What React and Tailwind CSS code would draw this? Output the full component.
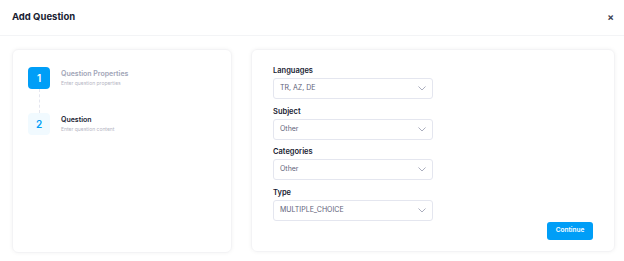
import React from "react";

const font = { fontFamily: "Inter, 'Noto Sans', sans-serif" };

// Small chevron used on the select boxes
const Chevron = () => (
  <svg width="8" height="5" viewBox="0 0 8 5" fill="none">
    <path d="M0.75 0.75L4 4L7.25 0.75" stroke="#a1a5b7" strokeWidth="0.9" strokeLinecap="round" strokeLinejoin="round" />
  </svg>
);

const fields = [
  { label: "Languages", value: "TR, AZ, DE" },
  { label: "Subject", value: "Other" },
  { label: "Categories", value: "Other" },
  { label: "Type", value: "MULTIPLE_CHOICE" },
];

const Field = ({ label, value }) => (
  <div className="flex flex-col">
    <div className="text-[7.5px] leading-[11px] font-semibold text-[#181c32] mb-[2px]">{label}</div>
    <div className="w-[160px] h-[21px] border border-[#e4e6ef] rounded-[3px] flex items-center justify-between pl-[6px] pr-[6px] bg-white">
      <span className="text-[7px] text-[#5e6278]">{value}</span>
      <Chevron />
    </div>
  </div>
);

const Step = ({ num, title, subtitle, active }) => (
  <div className="flex items-start">
    <div
      className={
        active
          ? "w-[22px] h-[22px] rounded-[4px] bg-[#009ef7] text-white flex items-center justify-center text-[10px] font-semibold"
          : "w-[22px] h-[22px] rounded-[4px] bg-[#f1faff] text-[#009ef7] flex items-center justify-center text-[10px] font-semibold"
      }
    >
      {num}
    </div>
    <div className="ml-[11px] pt-[2px] flex flex-col">
      <span className={active ? "text-[7px] leading-[10px] font-semibold text-[#a1a5b7]" : "text-[7px] leading-[10px] font-semibold text-[#181c32]"}>
        {title}
      </span>
      <span className="text-[5px] leading-[8px] text-[#b5b5c3]">{subtitle}</span>
    </div>
  </div>
);

export default function App() {
  return (
    <div className="w-[624px] h-[261px] bg-white overflow-hidden" style={font}>
      {/* header */}
      <div className="h-[36px] px-[12px] flex items-center justify-between border-b border-[#f3f4f6]">
        <span className="text-[9.5px] font-bold text-[#181c32]">Add Question</span>
        <span className="text-[10px] font-bold text-[#3f4254] mr-[-2px]">×</span>
      </div>

      <div className="flex gap-[19px] pl-[12px] pt-[13px]">
        {/* steps card */}
        <div className="shrink-0 w-[220px] h-[204px] rounded-[6px] border border-[#f3f3f5] shadow-[0_0_4px_rgba(0,0,0,0.05)] pt-[17px] pl-[15px]">
          <Step num="1" title="Question Properties" subtitle="Enter question properties" active />
          <div className="ml-[10.5px] h-[24px] border-l border-dashed border-[#e4e6ef]" />
          <Step num="2" title="Question" subtitle="Enter question content" />
        </div>

        {/* form card */}
        <div className="shrink-0 w-[364px] h-[203px] rounded-[6px] border border-[#f3f3f5] shadow-[0_0_4px_rgba(0,0,0,0.05)] pt-[15px] pl-[21px] pr-[21px] flex flex-col">
          <div className="flex flex-col gap-[6.5px]">
            {fields.map((f) => (
              <Field key={f.label} label={f.label} value={f.value} />
            ))}
          </div>
          <button className="self-end mt-[1px] w-[46px] h-[18px] rounded-[3px] bg-[#009ef7] text-white text-[6.5px] font-semibold">
            Continue
          </button>
        </div>
      </div>
    </div>
  );
}
